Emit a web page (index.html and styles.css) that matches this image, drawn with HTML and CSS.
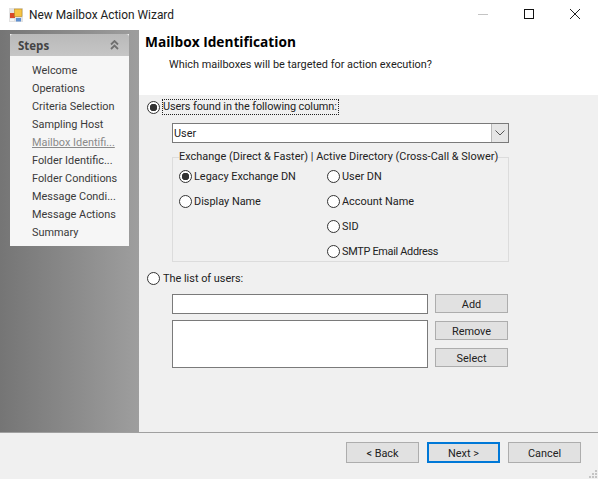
FILE: index.html
```html
<!DOCTYPE html>
<html lang="en">
<head>
<meta charset="utf-8">
<title>New Mailbox Action Wizard</title>
<link rel="stylesheet" href="styles.css">
</head>
<body>
<div class="window">
  <header class="titlebar">
    <svg class="app-icon" width="14" height="14" viewBox="0 0 14 14">
      <rect x="0" y="0" width="14" height="14" fill="#e2e2e2"/>
      <rect x="1" y="5" width="5" height="5" fill="#d8482a"/>
      <rect x="5.500" y="1" width="7.500" height="7.500" fill="#f6c445" stroke="#b98a22" stroke-width=".6"/>
      <rect x="7" y="10" width="5" height="3.500" fill="#5f8fd0"/>
      <rect x="1" y="11" width="4" height="2" fill="#f6f6f6"/>
    </svg>
    <span class="title-text">New Mailbox Action Wizard</span>
    <div class="window-controls">
      <svg class="ctl" width="46" height="30" viewBox="0 0 46 30"><path d="M18 14.500h10" stroke="#c4c4c4" fill="none"/></svg>
      <svg class="ctl" width="46" height="30" viewBox="0 0 46 30"><rect x="18.500" y="9.500" width="9" height="9" stroke="#111" fill="none"/></svg>
      <svg class="ctl" width="46" height="30" viewBox="0 0 46 30"><path d="M18 9l10 10M28 9L18 19" stroke="#222" fill="none"/></svg>
    </div>
  </header>
  <div class="main">
    <aside class="sidebar">
      <div class="panel">
        <div class="panel-head">
          <span>Steps</span>
          <svg width="9" height="10" viewBox="0 0 9 10"><path d="M1 4.500l3.500-3.500 3.500 3.500M1 9l3.500-3.500L8 9" fill="none" stroke="#707070" stroke-width="1.800"/></svg>
        </div>
        <ul class="steps">
          <li>Welcome</li>
          <li>Operations</li>
          <li>Criteria Selection</li>
          <li>Sampling Host</li>
          <li class="current">Mailbox Identifi...</li>
          <li>Folder Identific...</li>
          <li>Folder Conditions</li>
          <li>Message Condi...</li>
          <li>Message Actions</li>
          <li>Summary</li>
        </ul>
      </div>
    </aside>
    <section class="content">
      <div class="page-head">
        <h1>Mailbox Identification</h1>
        <p>Which mailboxes will be targeted for action execution?</p>
      </div>
      <div class="form">
        <div class="option">
          <span class="radio on"></span>
          <span class="focus-label">Users found in the following column:</span>
        </div>
        <div class="combo">
          <span class="combo-value">User</span>
          <span class="combo-btn">
            <svg width="10" height="6" viewBox="0 0 10 6"><path d="M.5.500L5 5 9.500.500" fill="none" stroke="#555"/></svg>
          </span>
        </div>
        <fieldset class="group">
          <legend>Exchange (Direct &amp; Faster) | Active Directory (Cross-Call &amp; Slower)</legend>
          <div class="group-grid">
            <div class="cell"><span class="radio on"></span>Legacy Exchange DN</div>
            <div class="cell"><span class="radio"></span>User DN</div>
            <div class="cell"><span class="radio"></span>Display Name</div>
            <div class="cell"><span class="radio"></span>Account Name</div>
            <div class="cell"></div>
            <div class="cell"><span class="radio"></span>SID</div>
            <div class="cell"></div>
            <div class="cell tight"><span class="radio"></span>SMTP Email Address</div>
          </div>
        </fieldset>
        <div class="option option-list">
          <span class="radio"></span>
          <span class="plain-label">The list of users:</span>
        </div>
        <div class="list-area">
          <div class="fields">
            <div class="field"></div>
            <div class="field tall"></div>
          </div>
          <div class="list-buttons">
            <span class="btn">Add</span>
            <span class="btn">Remove</span>
            <span class="btn">Select</span>
          </div>
        </div>
      </div>
    </section>
  </div>
  <footer class="footer">
    <span class="btn nav">&lt; Back</span>
    <span class="btn nav primary">Next &gt;</span>
    <span class="btn nav">Cancel</span>
    <svg class="grip" width="9" height="9" viewBox="0 0 9 9"><path d="M6 0h2v2H6zM3 3h2v2H3zM6 3h2v2H6zM0 6h2v2H0zM3 6h2v2H3zM6 6h2v2H6z" fill="#c4c4c4"/></svg>
  </footer>
</div>
</body>
</html>
```
FILE: styles.css
```css
* { box-sizing: border-box; }
html, body { margin: 0; padding: 0; }
body {
  width: 598px;
  height: 479px;
  overflow: hidden;
  font-family: Roboto, "Open Sans", sans-serif;
  font-size: 10.900px;
  color: #222;
  background: #f0f0f0;
}
.window { width: 598px; height: 479px; display: flex; flex-direction: column; position: relative; }
.titlebar { height: 30px; background: #fff; display: flex; align-items: center; padding-left: 9px; flex: none; }
.app-icon { flex: none; }
.title-text { margin-left: 6px; font-size: 11.900px; color: #222; }
.window-controls { margin-left: auto; display: flex; }
.ctl { display: block; }
.main { flex: none; height: 402px; display: flex; }
.sidebar {
  width: 139px;
  flex: none;
  padding: 4px 10px 0;
  background: linear-gradient(90deg, #757575 0%, #9e9e9e 100%);
}
.panel { background: #f6f6f6; }
.panel-head {
  height: 22px;
  border-radius: 3px 3px 0 0;
  background: linear-gradient(#b9b9b9, #c6c6c6);
  display: flex;
  align-items: center;
  justify-content: space-between;
  padding: 0 10px 0 8px;
  font-family: "Open Sans", sans-serif;
  font-size: 11.500px;
  font-weight: 700;
  color: #444;
}
.steps { list-style: none; margin: 0; padding: 6px 0 4px 22px; }
.steps li { height: 18px; line-height: 18px; white-space: nowrap; color: #3a3a3a; }
.steps .current { color: #8a8a8a; text-decoration: underline; }
.content { flex: 1; display: flex; flex-direction: column; min-width: 0; }
.page-head { height: 65px; background: #fff; padding: 3px 0 0 6px; flex: none; }
.page-head h1 { margin: 0; font-family: "Open Sans", sans-serif; font-size: 13.700px; font-weight: 700; color: #000; line-height: 18px; }
.page-head p { margin: 5px 0 0 24px; line-height: 18px; }
.form { padding: 4px 0 0 8px; flex: 1; }
.option { display: flex; align-items: center; height: 16px; }
.radio {
  flex: none;
  width: 13px;
  height: 13px;
  border: 1px solid #333;
  border-radius: 50%;
  background: #fff;
  display: inline-block;
}
.radio.on { background: radial-gradient(circle, #333 0 3.500px, #fff 4px); }
.focus-label { margin-left: 2px; border: 1px dotted #222; padding: 0 1px 0 0; line-height: 14px; white-space: nowrap; letter-spacing: -0.080px; }
.combo {
  width: 337px;
  height: 20px;
  margin: 8px 0 0 25px;
  background: #fff;
  border: 1px solid #7a7a7a;
  display: flex;
  align-items: center;
  justify-content: space-between;
}
.combo-value { padding-left: 1px; }
.combo-btn { width: 17px; height: 18px; background: #e6e6e6; border-left: 1px solid #b8b8b8; display: flex; align-items: center; justify-content: center; }
.group {
  width: 337px;
  height: 113px;
  margin: 6px 0 0 25px;
  padding: 0 0 0 6px;
  border: 1px solid #dcdcdc;
  min-width: 0;
}
.group legend { padding: 0; line-height: 16px; white-space: nowrap; letter-spacing: 0.030px; }
.group-grid { display: grid; grid-template-columns: 148px 1fr; grid-auto-rows: 25px; margin-top: -1.500px; }
.cell { display: flex; align-items: center; gap: 2px; white-space: nowrap; }
.cell.tight { letter-spacing: -0.300px; }
.option-list { margin-top: 8px; }
.plain-label { margin-left: 3px; }
.list-area { display: flex; margin: 8px 0 0 25px; }
.fields { width: 256px; display: flex; flex-direction: column; gap: 6px; }
.field { height: 20px; background: #fff; border: 1px solid #7a7a7a; }
.field.tall { height: 48px; }
.list-buttons { margin-left: 7px; display: flex; flex-direction: column; gap: 8px; }
.btn {
  width: 73px;
  height: 19px;
  padding-top: 1px;
  background: #e1e1e1;
  border: 1px solid #adadad;
  display: flex;
  align-items: center;
  justify-content: center;
  color: #222;
}
.footer {
  flex: 1;
  border-top: 1px solid #a0a0a0;
  background: #f0f0f0;
  display: flex;
  gap: 8px;
  padding: 9px 17px 0 0;
  justify-content: flex-end;
  align-items: flex-start;
}
.btn.nav { height: 21px; }
.btn.primary { border: 2px solid #0078d7; }
.grip { position: absolute; right: 0; bottom: 0; }
```
